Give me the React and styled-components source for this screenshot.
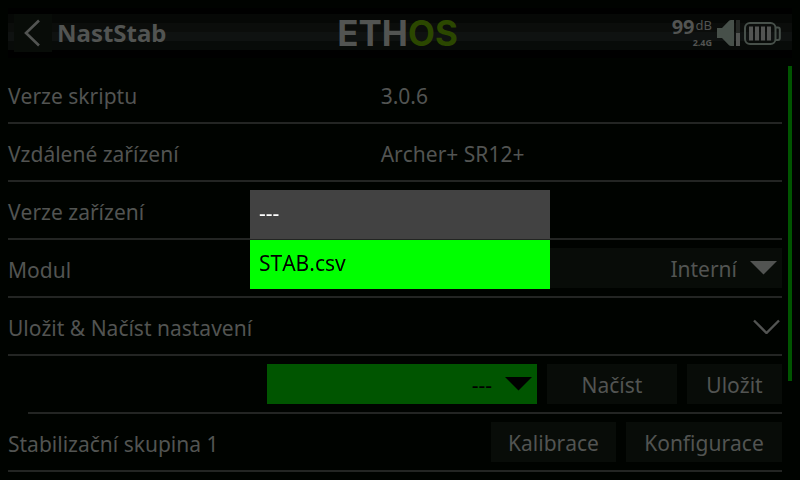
import { useState } from "react";
import styled, { createGlobalStyle, css } from "styled-components";

const colors = {
  page: "#000300",
  control: "#080c08",
  line: "#232523",
  text: "#525452",
  accent: "#005500",
  highlight: "#00ff00",
  olive: "#2b4700",
};

const GlobalStyle = createGlobalStyle`
  * {
    box-sizing: border-box;
  }
  body {
    margin: 0;
    background: ${colors.page};
  }
  body, button, select {
    font-family: "Noto Sans", sans-serif;
    font-size: 21px;
    font-kerning: none;
    line-height: 30px;
    color: ${colors.text};
  }
`;

const Screen = styled.div`
  display: flex;
  flex-direction: column;
  height: 100vh;
  overflow: hidden;
`;

const Header = styled.header`
  flex: none;
  display: grid;
  grid-template-columns: 1fr auto 1fr;
  align-items: center;
  height: 50px;
  margin: 8px;
  padding: 0 11px 0 6px;
  background: linear-gradient(
    #000000 0 6px,
    #060806 6px 15px,
    #0b0d0b 15px 24px,
    #0f1211 24px 33px,
    #080b09 33px 42px,
    #000000 42px
  );
`;

const HeaderSide = styled.div`
  display: flex;
  align-items: center;
  gap: 5px;
  justify-content: ${(props) => (props.$end ? "flex-end" : "flex-start")};
`;

const BackButton = styled.button`
  display: flex;
  align-items: center;
  justify-content: center;
  width: 38px;
  height: 38px;
  padding: 0;
  border: none;
  background: ${colors.control};
  cursor: pointer;
`;

const Title = styled.h1`
  margin: 0;
  font-size: 24px;
  font-weight: 700;
`;

const Logo = styled.div`
  font-family: Inter, sans-serif;
  font-size: 35px;
  font-weight: 700;
  line-height: 50px;

  span {
    color: ${colors.olive};
  }
`;

const Signal = styled.div`
  display: grid;
  grid-template-columns: auto auto;
  justify-items: end;
  column-gap: 1px;
`;

const SignalValue = styled.span`
  font-size: 20px;
  font-weight: 700;
  line-height: 20px;
`;

const SignalUnit = styled.span`
  font-size: 13px;
  line-height: 16px;
`;

const SignalBand = styled.span`
  grid-column: 1 / -1;
  font-size: 9px;
  font-weight: 700;
  line-height: 12px;
`;

const StatusIcons = styled.div`
  display: flex;
  align-items: center;
  gap: 3px;
`;

const Body = styled.div`
  flex: 1;
  min-height: 0;
  display: flex;
  gap: 6px;
  padding: 0 8px;
`;

const Rows = styled.main`
  flex: 1;
  min-width: 0;
`;

const Row = styled.div`
  display: grid;
  grid-template-columns: ${(props) => (props.$auto ? "auto 1fr" : "13fr 14fr")};
  align-items: center;
  min-height: 58px;
  margin-left: ${(props) => (props.$indent ? "20px" : "0")};
  padding: 8px 0;
  border-bottom: 2px solid ${colors.line};
`;

const Expander = styled.button`
  display: flex;
  align-items: center;
  justify-content: space-between;
  width: 100%;
  min-height: 58px;
  padding: 8px 2px 8px 0;
  border: none;
  border-bottom: 2px solid ${colors.line};
  background: none;
  text-align: left;
  cursor: pointer;
`;

const Text = styled.span`
  padding-top: 3px;
`;

const Actions = styled.div`
  grid-column: 2;
  display: flex;
  justify-content: flex-end;
  gap: 10px;
`;

const Button = styled.button`
  min-width: ${(props) => props.$width};
  height: 40px;
  padding: 2px 10px 0;
  border: none;
  background: ${colors.control};
  cursor: pointer;
`;

const SelectBox = styled.div`
  display: grid;
  align-items: center;
  ${(props) => props.$compact && "flex: 0 1 270px;"}

  select,
  svg {
    grid-area: 1 / 1;
  }

  svg {
    justify-self: end;
    margin-right: 5px;
    pointer-events: none;
  }
`;

const Select = styled.select`
  appearance: none;
  width: 100%;
  height: 40px;
  padding: 2px 45px 0 10px;
  border: none;
  border-radius: 0;
  outline: none;
  background: ${colors.control};
  text-align: right;
  text-align-last: right;

  ${(props) =>
    props.$active &&
    css`
      background: ${colors.accent};
      color: #000;
    `}
`;

const ScrollTrack = styled.div`
  flex: none;
  width: 4px;
`;

const ScrollThumb = styled.div`
  height: 76%;
  background: ${colors.accent};
`;

const Overlay = styled.div`
  position: fixed;
  inset: 0;
  display: grid;
  place-items: center;
`;

const Menu = styled.div`
  display: flex;
  flex-direction: column;
  width: 300px;
`;

const MenuItem = styled.button`
  height: 50px;
  padding: 0 9px 3px;
  border: none;
  border-bottom: 1px solid transparent;
  background: ${(props) => (props.$selected ? colors.highlight : "#424242")};
  background-clip: padding-box;
  color: ${(props) => (props.$selected ? "#000" : "#fff")};
  text-align: left;
  cursor: pointer;
`;

const ArrowDown = ({ color }) => (
  <svg width="27" height="14" viewBox="0 0 27 14" aria-hidden="true">
    <path d="M0 0H27L13.5 13.5Z" fill={color} />
  </svg>
);

const BackIcon = () => (
  <svg width="20" height="28" viewBox="0 0 20 28" aria-hidden="true">
    <path d="M16 1.5L3 14L16 26.5" fill="none" stroke={colors.text} strokeWidth="2.6" />
  </svg>
);

const ChevronDown = () => (
  <svg width="27" height="16" viewBox="0 0 27 16" aria-hidden="true">
    <path d="M1 2.5L13.5 15L26 2.5" fill="none" stroke={colors.text} strokeWidth="2.4" />
  </svg>
);

const SpeakerIcon = () => (
  <svg width="24" height="26" viewBox="0 0 24 26" aria-hidden="true">
    <path d="M0 8H5L12 0.8Q12.8 0 14 0H17V26H14Q12.8 26 12 25.2L5 18H0Z" fill="#47504a" />
    <rect x="19" y="0" width="4" height="13" fill="#252825" />
    <rect x="19" y="13" width="4" height="13" fill={colors.text} />
  </svg>
);

const BatteryIcon = () => (
  <svg width="37" height="24" viewBox="0 0 37 24" aria-hidden="true">
    <rect x="1" y="2" width="30.5" height="21" rx="5" fill="none" stroke="#47504a" strokeWidth="2" />
    <path d="M31.5 6.5H34Q35.8 6.5 35.8 8.5V17Q35.8 19 34 19H31.5" fill="none" stroke="#47504a" strokeWidth="2" />
    {[5, 11, 17, 23].map((x) => (
      <rect key={x} x={x} y="5.5" width="4" height="14" fill={colors.text} />
    ))}
  </svg>
);

const files = ["---", "STAB.csv"];

const App = () => {
  const [file, setFile] = useState("---");
  const [open, setOpen] = useState(true);

  const pick = (name) => {
    setFile(name);
    setOpen(false);
  };

  return (
    <Screen>
      <GlobalStyle />
      <Header>
        <HeaderSide>
          <BackButton type="button" aria-label="Zpět">
            <BackIcon />
          </BackButton>
          <Title>NastStab</Title>
        </HeaderSide>
        <Logo>
          ETH<span>OS</span>
        </Logo>
        <HeaderSide $end>
          <Signal>
            <SignalValue>99</SignalValue>
            <SignalUnit>dB</SignalUnit>
            <SignalBand>2.4G</SignalBand>
          </Signal>
          <StatusIcons>
            <SpeakerIcon />
            <BatteryIcon />
          </StatusIcons>
        </HeaderSide>
      </Header>

      <Body>
        <Rows>
          <Row>
            <Text>Verze skriptu</Text>
            <Text>3.0.6</Text>
          </Row>
          <Row>
            <Text>Vzdálené zařízení</Text>
            <Text>Archer+ SR12+</Text>
          </Row>
          <Row>
            <Text>Verze zařízení</Text>
          </Row>
          <Row>
            <Text as="label" htmlFor="module">Modul</Text>
            <SelectBox>
              <Select id="module" defaultValue="int">
                <option value="int">Interní</option>
              </Select>
              <ArrowDown color={colors.text} />
            </SelectBox>
          </Row>
          <Expander type="button" aria-expanded="true">
            <Text>Uložit &amp; Načíst nastavení</Text>
            <ChevronDown />
          </Expander>
          <Row $auto $indent>
            <Actions>
              <SelectBox $compact>
                <Select
                  $active
                  aria-label="Soubor nastavení"
                  value={file}
                  onChange={(e) => setFile(e.target.value)}
                >
                  {files.map((name) => (
                    <option key={name}>{name}</option>
                  ))}
                </Select>
                <ArrowDown color="#000" />
              </SelectBox>
              <Button type="button" $width="130px">Načíst</Button>
              <Button type="button" $width="95px">Uložit</Button>
            </Actions>
          </Row>
          <Row $auto>
            <Text>Stabilizační skupina 1</Text>
            <Actions>
              <Button type="button" $width="125px">Kalibrace</Button>
              <Button type="button" $width="156px">Konfigurace</Button>
            </Actions>
          </Row>
        </Rows>
        <ScrollTrack>
          <ScrollThumb />
        </ScrollTrack>
      </Body>

      {open && (
        <Overlay>
          <Menu role="listbox" aria-label="Soubor nastavení">
            {files.map((name) => (
              <MenuItem
                key={name}
                type="button"
                role="option"
                aria-selected={name === "STAB.csv"}
                $selected={name === "STAB.csv"}
                onClick={() => pick(name)}
              >
                {name}
              </MenuItem>
            ))}
          </Menu>
        </Overlay>
      )}
    </Screen>
  );
};

export default App;
